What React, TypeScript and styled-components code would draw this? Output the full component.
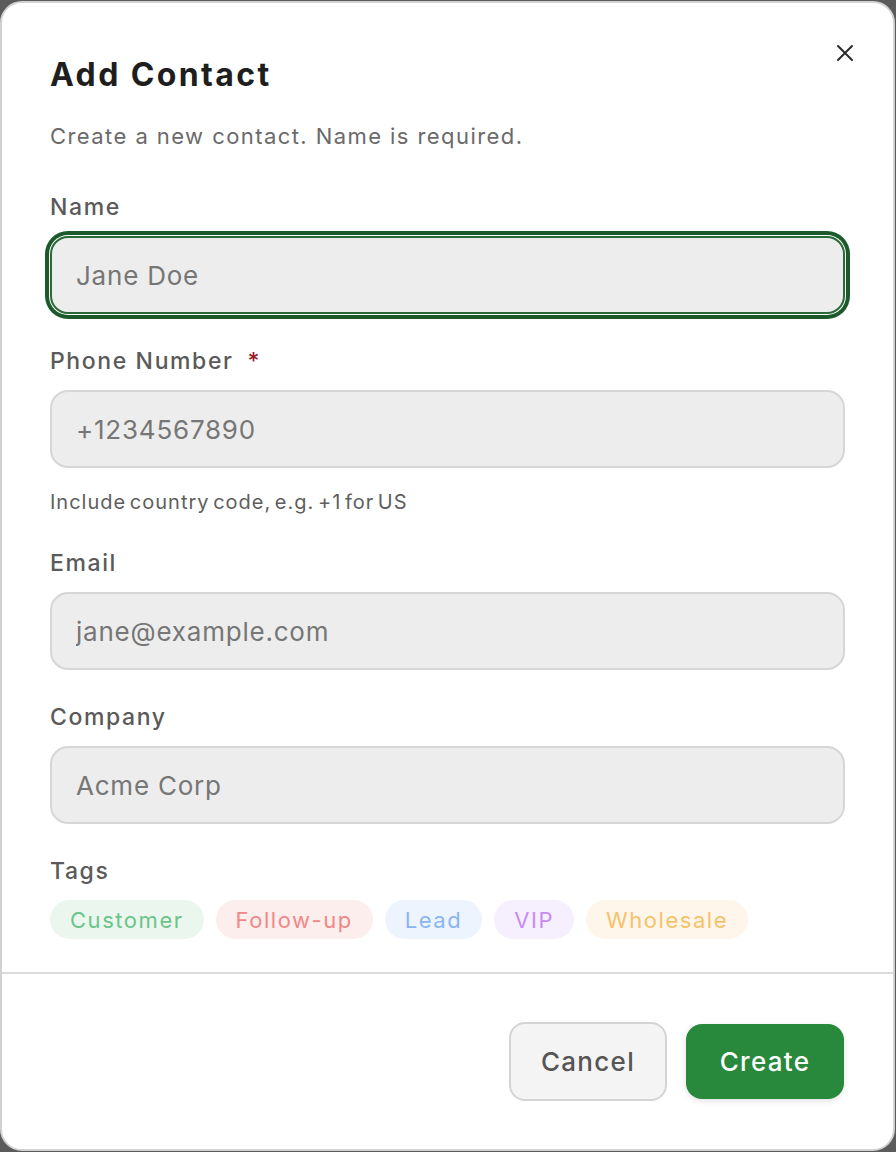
import styled, { createGlobalStyle } from 'styled-components';

const GlobalStyle = createGlobalStyle`
    * { box-sizing: border-box; }
    body {
        margin: 0;
        background: #5b5b5b;
        font-family: Inter, "Noto Sans", sans-serif;
    }
`

const Page = styled.div`
    padding: 1px 1px 1px 0;
    height: 1152px;
`
const Dialog = styled.div`
    position: relative;
    height: 100%;
    background: #ffffff;
    border: 2px solid #d2d2d2;
    border-radius: 22px;
    display: flex;
    flex-direction: column;
`
const Body = styled.div`
    padding: 52px 48px 0 48px;
    flex: 1;
`
const CloseButton = styled.button`
    position: absolute;
    top: 36px;
    right: 34px;
    width: 28px;
    height: 28px;
    border: none;
    background: none;
    padding: 0;
    display: flex;
    align-items: center;
    justify-content: center;
    color: #2a2a2a;
`
const Title = styled.h2`
    margin: 0;
    font-size: 32px;
    line-height: 40px;
    font-weight: 700;
    color: #1e1e1e;
    letter-spacing: 0.075em;
`
const Subtitle = styled.p`
    margin: 26px 0 0;
    font-size: 22px;
    line-height: 30px;
    color: #6a6a6a;
    letter-spacing: 0.065em;
`
const Form = styled.div`
    margin-top: 41px;
    display: flex;
    flex-direction: column;
    gap: 32px;
`
const Field = styled.div`
    display: flex;
    flex-direction: column;
`
const Label = styled.label`
    font-size: 23px;
    line-height: 30px;
    font-weight: 500;
    color: #5a5a5a;
    letter-spacing: 0.07em;
    margin-bottom: 14px;
`
const Required = styled.span`
    color: #9a1b2c;
    margin-left: 14px;
`
const Input = styled.input<{ $focused?: boolean }>`
    height: 78px;
    width: 100%;
    border-radius: 18px;
    border: 2px solid ${p => p.$focused ? '#2a6a38' : '#d6d6d6'};
    background: #ededed;
    padding: 0 24px;
    font-family: Inter, "Noto Sans", sans-serif;
    font-size: 26px;
    letter-spacing: 0.03em;
    color: #333;
    outline: none;
    box-shadow: ${p => p.$focused ? '0 0 0 1px #ffffff, 0 0 0 5px #1c5a2c' : 'none'};
    &::placeholder {
        color: #767676;
    }
`
const Hint = styled.div`
    margin-top: 20px;
    font-size: 20px;
    line-height: 28px;
    color: #5e5e5e;
    letter-spacing: 0.05em;
    word-spacing: -3px;
`
const TagRow = styled.div`
    display: flex;
    gap: 12px;
`
const Tag = styled.span<{ $bg: string; $fg: string }>`
    height: 39px;
    padding: 0 20px;
    border-radius: 999px;
    display: inline-flex;
    align-items: center;
    font-size: 22px;
    letter-spacing: 0.07em;
    background: ${p => p.$bg};
    color: ${p => p.$fg};
`
const Divider = styled.div`
    margin: 33px -48px 0;
    height: 2px;
    background: #dadada;
`
const Footer = styled.div`
    display: flex;
    justify-content: flex-end;
    align-items: center;
    gap: 19px;
    padding: 48px 49px 49px;
`
const Button = styled.button<{ $primary?: boolean }>`
    width: 158px;
    height: ${p => p.$primary ? '75px' : '79px'};
    border-radius: 16px;
    font-family: Inter, "Noto Sans", sans-serif;
    font-size: 26px;
    font-weight: 500;
    letter-spacing: 0.05em;
    border: ${p => p.$primary ? 'none' : '2px solid #d4d4d4'};
    background: ${p => p.$primary ? '#28883c' : '#f4f4f4'};
    color: ${p => p.$primary ? '#ffffff' : '#555555'};
    box-shadow: ${p => p.$primary ? '0 2px 6px rgba(0,0,0,0.12)' : 'none'};
`

const tags = [
    { name: 'Customer', bg: '#ebf7ee', fg: '#6cc48a' },
    { name: 'Follow-up', bg: '#fdeeee', fg: '#f08888' },
    { name: 'Lead', bg: '#eef4fe', fg: '#8ab4f2' },
    { name: 'VIP', bg: '#f6effe', fg: '#c68cf2' },
    { name: 'Wholesale', bg: '#fef6ea', fg: '#f6c26b' },
]

export default function App() {
    return (
        <Page>
            <GlobalStyle />
            <Dialog>
                <CloseButton aria-label="Close">
                    <svg width="18" height="18" viewBox="0 0 18 18" fill="none" stroke="currentColor" strokeWidth="2" strokeLinecap="round">
                        <path d="M2 2 L16 16 M16 2 L2 16" />
                    </svg>
                </CloseButton>
                <Body>
                    <Title>Add Contact</Title>
                    <Subtitle>Create a new contact. Name is required.</Subtitle>
                    <Form>
                        <Field>
                            <Label htmlFor="name">Name</Label>
                            <Input id="name" $focused placeholder="Jane Doe" />
                        </Field>
                        <Field>
                            <Label htmlFor="phone">Phone Number<Required>*</Required></Label>
                            <Input id="phone" placeholder="+1234567890" />
                            <Hint>Include country code, e.g. +1 for US</Hint>
                        </Field>
                        <Field>
                            <Label htmlFor="email">Email</Label>
                            <Input id="email" placeholder="jane@example.com" />
                        </Field>
                        <Field>
                            <Label htmlFor="company">Company</Label>
                            <Input id="company" placeholder="Acme Corp" />
                        </Field>
                        <Field>
                            <Label>Tags</Label>
                            <TagRow>
                                {tags.map(t => (
                                    <Tag key={t.name} $bg={t.bg} $fg={t.fg}>{t.name}</Tag>
                                ))}
                            </TagRow>
                        </Field>
                    </Form>
                    <Divider />
                </Body>
                <Footer>
                    <Button>Cancel</Button>
                    <Button $primary>Create</Button>
                </Footer>
            </Dialog>
        </Page>
    )
}
